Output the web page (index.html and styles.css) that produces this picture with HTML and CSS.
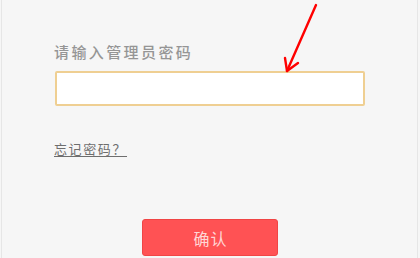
FILE: index.html
```html
<!DOCTYPE html>
<html lang="zh-CN">
<head>
<meta charset="utf-8">
<link rel="stylesheet" href="styles.css">
</head>
<body>
<div class="frame">
  <form class="login">
    <label class="label" for="pwd">请输入管理员密码</label>
    <input class="pwd" id="pwd" type="password">
    <a class="forgot" href="#">忘记密码？</a>
    <div class="actions">
      <button class="confirm" type="button">确认</button>
    </div>
  </form>
  <svg class="arrow" width="44" height="80" viewBox="0 0 44 80">
    <path d="M39 4 L10 70" stroke="#ff0000" stroke-width="2.4" fill="none" stroke-linecap="round"/>
    <path d="M8 57 L10 70 L21 62" stroke="#ff0000" stroke-width="2.4" fill="none" stroke-linecap="round" stroke-linejoin="round"/>
  </svg>
</div>
</body>
</html>
```
FILE: styles.css
```css
html, body {
  margin: 0;
  padding: 0;
  background: #f6f6f6;
}
.frame {
  position: relative;
  box-sizing: border-box;
  height: 258px;
  margin: 0 2px 0 1px;
  border-left: 1px solid #e6e6e6;
  border-right: 1px solid #e6e6e6;
  overflow: hidden;
  font-family: "Noto Sans CJK SC", "Noto Sans", sans-serif;
}
.login {
  display: flex;
  flex-direction: column;
  align-items: flex-start;
  padding: 44px 0 0 52px;
  margin: 0;
}
.label {
  font-size: 15px;
  line-height: 16px;
  letter-spacing: 2.4px;
  color: #959595;
  font-weight: 500;
}
.pwd {
  box-sizing: border-box;
  margin: 11px 0 0 1px;
  width: 310px;
  height: 35px;
  background: #fff;
  border: 2px solid #efcf92;
  border-radius: 2px;
  outline: none;
  padding: 0 8px;
}
.forgot {
  margin-top: 35px;
  font-size: 13px;
  line-height: 16px;
  letter-spacing: 1.6px;
  color: #6e6e6e;
  text-decoration: underline;
  text-underline-offset: 2px;
}
.actions {
  align-self: stretch;
  display: flex;
  padding-left: 88px;
  margin-top: 62px;
}
.confirm {
  width: 136px;
  height: 37px;
  background: #ff5254;
  border: 1px solid #f04545;
  border-radius: 3px;
  color: #ffd6d6;
  font-family: "Noto Sans CJK SC", "Noto Sans", sans-serif;
  font-size: 16px;
  letter-spacing: 1px;
  padding: 0 0 0 1px;
}
.arrow {
  position: absolute;
  left: 275px;
  top: 1px;
}
```
